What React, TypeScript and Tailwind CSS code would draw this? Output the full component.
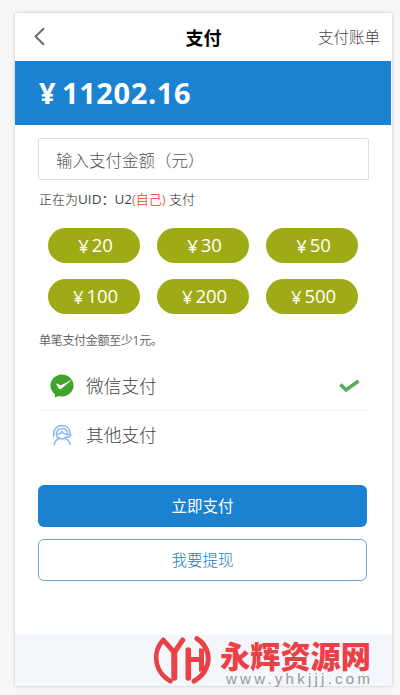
import React from "react";

const amounts = ["20", "30", "50", "100", "200", "500"];

function WechatIcon() {
  return (
    <svg width="24" height="24" viewBox="0 0 24 24" className="shrink-0">
      <path
        d="M12 .4C5.600.4.4 5.400.4 11.600c0 3.500 1.700 6.600 4.500 8.600L4.900 23.500l4-1.500c1 .3 2 .4 3.100.4 6.400 0 11.600-4.900 11.600-10.900S18.400.4 12 .4z"
        fill="#3fa32c"
      />
      <path d="M6.300 9.800c.8-.6 1.500-.3 2.100.2l2 1.400L22.400 5.600 10.900 14.900c-.8.700-1.700.6-2.200-.3l-2.600-4.800z" fill="#fff" />
    </svg>
  );
}

function AgentIcon() {
  return (
    <svg
      width="21"
      height="22"
      viewBox="0 0 21 22"
      fill="none"
      stroke="#85b8f3"
      strokeWidth="1.500"
      strokeLinecap="round"
      className="shrink-0"
    >
      <path d="M1.700 12.500C.9 6.200 4.600 1.500 9.900 1.500c4.600 0 7.900 3.300 8.300 8" />
      <path d="M5 13.200C3.200 8.400 5.800 4.600 9.900 4.600c3.300 0 5.400 2.300 5.600 5.200" />
      <path d="M6 10.300c1.800-.3 3-1.100 3.900-2.600 1.300 2.200 3.500 3.100 8.300 3" />
      <path d="M6.300 13.300c2 2.300 5.600 2.300 7.500 0M13.800 13h3c1.300 0 2-.9 1.900-2.500" />
      <path d="M2.200 20.500c.4-2.800 2.100-4.800 4.500-5.700M18 20.500c-.4-2.800-2.100-4.800-4.500-5.700" />
    </svg>
  );
}

function BrandMark() {
  return (
    <svg width="57" height="50" viewBox="0 0 57 50" fill="none" stroke="#ea4146" strokeLinecap="round" className="shrink-0">
      <path d="M9.300 5.200C1.500 12.500.5 24.500 4.500 33.500c2.400 5.500 6.600 9.500 12 12.700" strokeWidth="4.600" />
      <path d="M9.300 5.200L20.300 17.500 28.700 5" strokeWidth="5" />
      <path d="M20.300 17.500v25.300" strokeWidth="6" />
      <path d="M34.300 15v28" strokeWidth="5.600" />
      <path d="M34.300 24.500h13M47.500 13.500v23" strokeWidth="5" strokeLinecap="butt" />
      <path d="M43 3.700C54.500 11 56.500 24.500 52 33.500c-2.500 5.500-6.500 9.500-12 12.700" strokeWidth="5" />
    </svg>
  );
}

export default function App() {
  return (
    <div className="h-[695px] w-[400px] overflow-hidden bg-[#f6f6f6] pl-[15px] pt-[13px] font-['Open_Sans','Noto_Sans_CJK_SC',sans-serif]">
      <main className="flex h-[673px] w-[377px] flex-col bg-white shadow-[0_0_3px_rgba(0,0,0,0.22)]">
        <header className="grid h-12 shrink-0 grid-cols-3 items-center pl-[19px] pr-3">
          <svg width="11" height="19" viewBox="0 0 11 19" fill="none" stroke="#666" strokeWidth="1.900" className="-mt-0.5">
            <path d="M10 1.200L1.500 9.500 10 17.800" />
          </svg>
          <h1 className="pt-px pr-[7px] text-center text-[18px] leading-6 font-bold text-black">支付</h1>
          <span className="whitespace-nowrap text-right text-[15.500px] leading-6 font-light text-[#444]">支付账单</span>
        </header>

        <section className="flex h-16 w-[375.500px] shrink-0 items-center bg-[#1b81d1] pl-6 text-[29px] font-bold text-white">
          <span className="mr-[5px] w-[18px]">¥</span>
          <span className="tracking-[0.600px]">11202.16</span>
        </section>

        <section className="flex flex-col pl-[23px] pr-[23px]">
          <div className="mt-[13px] flex h-[42px] items-center rounded-[2px] border border-[#dedede] pt-[5px] pl-[17px] text-[16.500px] font-light text-[#555]">
            输入支付金额（元）
          </div>
          <p className="mt-[9px] h-5 whitespace-nowrap pl-px text-[13px] leading-5 text-[#444]">
            <span className="font-light text-[#222]">正在为</span>
            <span className="text-[13.500px]">UID</span>：<span className="text-[13.500px]">U2</span>
            <span className="text-[#ee6547]">(自己)</span>
            <span className="font-light text-[#222]"> 支付</span>
          </p>

          <div className="ml-[10px] mt-[19px] grid w-[310px] grid-cols-3 gap-x-[17px] gap-y-4">
            {amounts.map((amount) => (
              <button
                key={amount}
                className="flex h-[35px] items-center justify-center gap-[3px] rounded-full bg-[#9fab16] pl-[3px] text-[18.500px] font-medium tracking-[-0.100px] text-white"
              >
                <span>¥</span>
                <span className="-mt-px">{amount}</span>
              </button>
            ))}
          </div>

          <p className="mt-[17px] pl-px text-[12px] leading-5 tracking-[-0.300px] text-[#666]">单笔支付金额至少1元。</p>

          <div className="mt-[11px] flex h-[49px] items-center border-b border-[#f3f3f3] pl-3">
            <WechatIcon />
            <span className="ml-3 text-[17.700px] font-light text-[#444]">微信支付</span>
            <svg width="21" height="14" viewBox="0 0 21 14" className="ml-auto mr-[9px]">
              <path d="M1.500 5.500L7 11 19.500 2" fill="none" stroke="#56ad5c" strokeWidth="3.600" />
            </svg>
          </div>
          <div className="flex h-12 items-center pl-[14px]">
            <AgentIcon />
            <span className="ml-[13px] text-[17.700px] font-light text-[#444]">其他支付</span>
          </div>
        </section>

        <section className="mt-[26px] flex flex-col gap-3 pl-[23px] pr-[25px] text-[15.500px]">
          <button className="h-[42px] rounded-[6px] bg-[#1b81d1] pt-0.5 text-white">立即支付</button>
          <button className="h-[42px] rounded-[6px] border border-[#6ba8dc] pt-px font-light text-[#1b79c4]">我要提现</button>
        </section>

        <footer className="mt-auto flex h-[51px] shrink-0 bg-[#f3f6fa] pl-[139px]">
          <BrandMark />
          <div className="ml-[9px] flex flex-col pt-[4px]">
            <span className="whitespace-nowrap font-['Noto_Sans_CJK_SC',sans-serif] text-[30.200px] leading-[32px] font-black text-[#ea4146]">
              永辉资源网
            </span>
            <span className="whitespace-nowrap pl-[6px] font-['Liberation_Sans',Arial,sans-serif] text-[15px] leading-[16px] tracking-[3.250px] text-[#999]">
              www.yhkjjj.com
            </span>
          </div>
        </footer>
      </main>
    </div>
  );
}
